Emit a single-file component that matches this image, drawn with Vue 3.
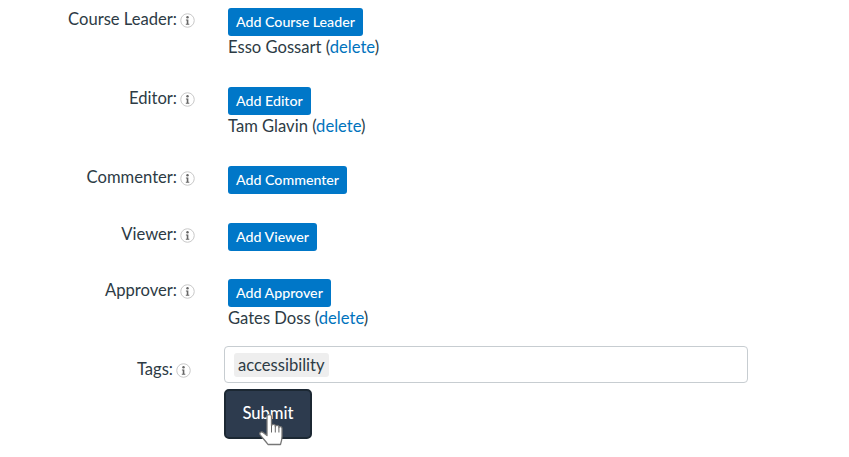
<template>
  <div class="form">
    <div v-for="role in roles" :key="role.label" class="row">
      <div class="label">
        <span>{{ role.label }}:</span>
        <svg class="info" viewBox="0 0 16 16" aria-hidden="true">
          <circle cx="8" cy="8" r="7.2" fill="#fff" stroke="#c4c4c4" stroke-width="1" />
          <circle cx="8" cy="4.6" r="1.3" fill="#666" />
          <path d="M6.3 6.9h2.6v4.6h1v1H6.2v-1h1V7.9h-.9z" fill="#666" />
        </svg>
      </div>
      <div class="field">
        <button class="add" type="button">Add {{ role.label }}</button>
        <div v-if="role.person" class="person">
          {{ role.person }} (<a href="#" @click.prevent>delete</a>)
        </div>
      </div>
    </div>

    <div class="tags-row">
      <div class="label tags-label">
        <span>Tags:</span>
        <svg class="info" viewBox="0 0 16 16" aria-hidden="true">
          <circle cx="8" cy="8" r="7.2" fill="#fff" stroke="#c4c4c4" stroke-width="1" />
          <circle cx="8" cy="4.6" r="1.3" fill="#666" />
          <path d="M6.3 6.9h2.6v4.6h1v1H6.2v-1h1V7.9h-.9z" fill="#666" />
        </svg>
      </div>
      <div class="tags-field">
        <div class="tags-input"><span class="tag">accessibility</span></div>
        <div class="submit-wrap">
          <button class="submit" type="button">Submit</button>
          <svg class="cursor" viewBox="0 0 25 33" aria-hidden="true">
            <path d="M8 2.5c0-2.500 4.500-2.500 4.500 0v9c.3-1.500 3.500-1.500 3.800 0v1c.3-1.500 3.300-1.500 3.600 0v1c.5-1.500 3.100-1 3.100 1v8c0 3-.5 5-1.500 8H9C7 27.500 3 23.500 1 20.500c-1-2 1.500-3.500 3-2l4 3z" fill="#fff" stroke="#777" stroke-width="1.300" stroke-linejoin="round" />
            <path d="M12.500 11.500v7M16.300 12.500v6M19.900 13.500v5" stroke="#666" stroke-width="1" fill="none" />
          </svg>
        </div>
      </div>
    </div>
  </div>
</template>

<script setup>
const roles = [
  { label: 'Course Leader', person: 'Esso Gossart' },
  { label: 'Editor', person: 'Tam Glavin' },
  { label: 'Commenter' },
  { label: 'Viewer' },
  { label: 'Approver', person: 'Gates Doss' },
]
</script>

<style>
body {
  background: #fff;
}
</style>

<style scoped>
.form {
  width: 849px;
  height: 457px;
  overflow: hidden;
  box-sizing: border-box;
  padding-top: 8px;
  font-family: Lato, "Liberation Sans", sans-serif;
  font-size: 16.6px;
  line-height: 22px;
  color: #2d3b45;
}

.row {
  display: grid;
  grid-template-columns: 195px 1fr;
  column-gap: 33px;
  margin-bottom: 28.5px;
}

.label {
  display: flex;
  justify-content: flex-end;
  align-items: flex-start;
  gap: 3px;
}

.info {
  width: 15px;
  height: 15px;
  margin-top: 5px;
}

.field {
  min-height: 28px;
}

.add {
  display: block;
  height: 28px;
  padding: 0 8px;
  border: 0;
  border-radius: 3px;
  background: #0077c8;
  color: #fff;
  font: 500 14.2px/28px Lato, "Liberation Sans", sans-serif;
}

.person {
  height: 22.5px;
  margin-top: -0.5px;
  margin-bottom: 0.5px;
}

.person a {
  color: #0073bd;
  text-decoration: none;
}

.tags-row {
  display: grid;
  grid-template-columns: 191px 1fr;
  column-gap: 33px;
  margin-top: -12px;
}

.tags-label {
  padding-top: 12px;
}

.tags-input {
  box-sizing: border-box;
  width: 524px;
  height: 37px;
  padding: 6px 9px;
  border: 1px solid #c7cdd1;
  border-radius: 4px;
  background: #fff;
}

.tag {
  display: inline-block;
  padding: 0 4px;
  height: 24px;
  line-height: 24px;
  border-radius: 3px;
  background: #eee;
  font-size: 16.6px;
}

.submit-wrap {
  position: relative;
  width: 88px;
  margin-top: 6px;
}

.submit {
  display: block;
  box-sizing: border-box;
  width: 88px;
  height: 50px;
  padding-bottom: 3px;
  border: 2px solid #1c2833;
  border-radius: 5px;
  background: #2d3b4e;
  color: #fff;
  font: 500 16.6px Lato, "Liberation Sans", sans-serif;
}

.cursor {
  position: absolute;
  left: 35px;
  top: 25px;
  width: 25px;
  height: 33px;
}
</style>
